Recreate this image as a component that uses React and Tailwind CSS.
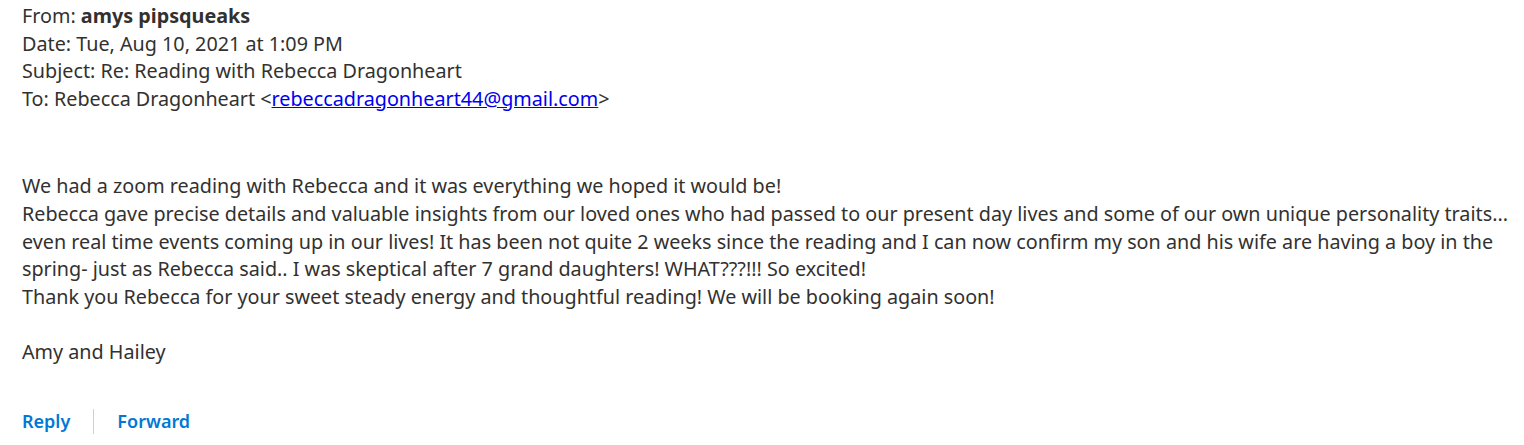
import React from 'react';

const header = [
  { label: 'From: ', value: 'amys pipsqueaks', bold: true },
  { label: 'Date: ', value: 'Tue, Aug 10, 2021 at 1:09 PM' },
  { label: 'Subject: ', value: 'Re: Reading with Rebecca Dragonheart' },
];

const body = [
  'We had a zoom reading with Rebecca and it was everything we hoped it would be!',
  'Rebecca gave precise details and valuable insights from our loved ones who had passed to our present day lives and some of our own unique personality traits...',
  'even real time events coming up in our lives! It has been not quite 2 weeks since the reading and I can now confirm my son and his wife are having a boy in the',
  'spring- just as Rebecca said.. I was skeptical after 7 grand daughters! WHAT???!!! So excited!',
  'Thank you Rebecca for your sweet steady energy and thoughtful reading! We will be booking again soon!',
];

export default function App() {
  return (
    <div
      className="w-[1524px] h-[445px] bg-white text-[#323130] text-[19.75px] leading-[27.6px] pl-[22px] pt-[2px] overflow-hidden"
      style={{ fontFamily: '"Noto Sans", "Open Sans", sans-serif' }}
    >
      {header.map((row) => (
        <div key={row.label} className="whitespace-nowrap">
          {row.label}
          <span className={row.bold ? 'font-bold' : ''}>{row.value}</span>
        </div>
      ))}
      <div className="whitespace-nowrap">
        To: Rebecca Dragonheart &lt;
        <a href="#" className="text-[#0000ee] underline">rebeccadragonheart44@gmail.com</a>
        &gt;
      </div>

      <div className="mt-[60px]">
        {body.map((line) => (
          <div key={line} className="whitespace-nowrap">{line}</div>
        ))}
        <div className="h-[27.6px]" />
        <div>Amy and Hailey</div>
      </div>

      <div className="flex items-center mt-[42px] text-[18px] font-semibold text-[#0078d4]">
        <span>Reply</span>
        <span className="mx-[23px] w-px h-[25px] bg-[#d2d0ce]" />
        <span>Forward</span>
      </div>
    </div>
  );
}
